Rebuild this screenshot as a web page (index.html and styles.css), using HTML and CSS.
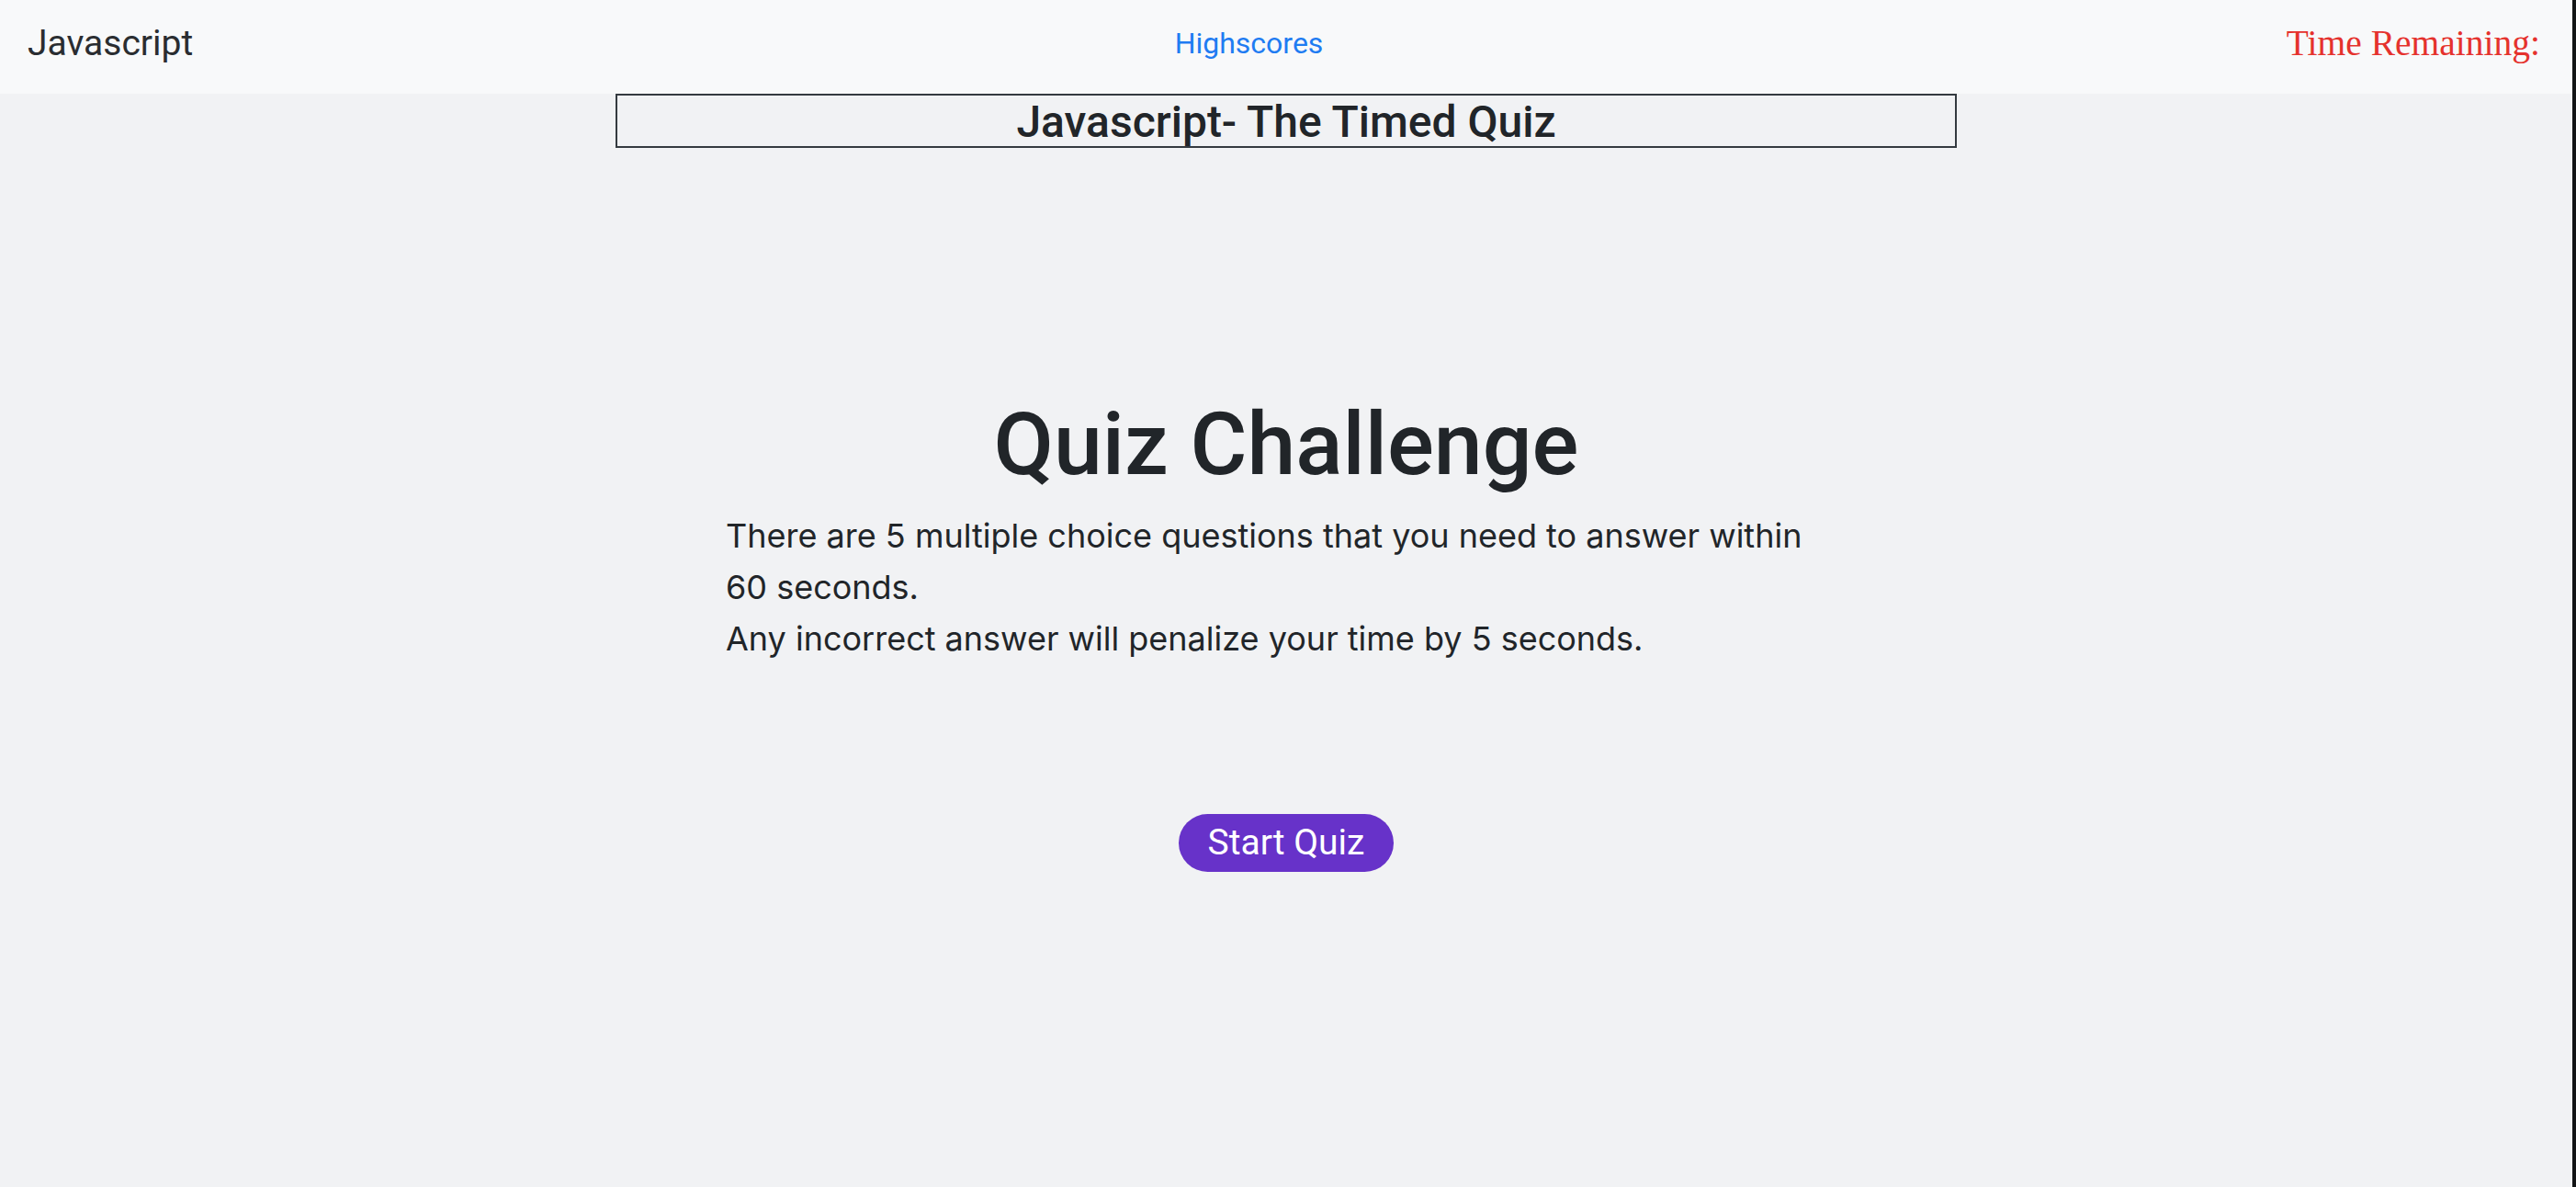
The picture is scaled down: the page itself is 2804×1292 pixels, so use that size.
FILE: index.html
```html
<!DOCTYPE html>
<html lang="en">
<head>
<meta charset="utf-8">
<title>Javascript- The Timed Quiz</title>
<link rel="stylesheet" href="styles.css">
</head>
<body>
<div class="page">
  <nav class="navbar">
    <span class="brand">Javascript</span>
    <a class="nav-link" href="#">Highscores</a>
    <div class="timer">Time Remaining:</div>
  </nav>
  <header class="title-box">
    <h3 class="title">Javascript- The Timed Quiz</h3>
  </header>
  <main class="intro">
    <h1 class="intro-heading">Quiz Challenge</h1>
    <p class="intro-text">There are 5 multiple choice questions that you need to answer within 60 seconds.<br>Any incorrect answer will penalize your time by 5 seconds.</p>
    <button class="start-btn" type="button">Start Quiz</button>
  </main>
</div>
<div class="edge"></div>
</body>
</html>
```

FILE: styles.css
```css
html, body {
  margin: 0;
  padding: 0;
  height: 100%;
}

body {
  display: flex;
  font-family: Roboto, "Liberation Sans", Arial, sans-serif;
  color: #212529;
  background: #f1f2f4;
}

.page {
  flex: 1;
  display: flex;
  flex-direction: column;
  background: #f1f2f4;
  min-width: 0;
}

.edge {
  width: 4px;
  flex: 0 0 4px;
  background: #131516;
}

.navbar {
  height: 102px;
  box-sizing: border-box;
  background: #f8f9fa;
  display: flex;
  align-items: center;
  justify-content: space-between;
  padding: 0 35px 8px 30px;
}

.brand {
  font-size: 39px;
  line-height: 48px;
  color: #2a2d31;
}

.nav-link {
  font-size: 32px;
  line-height: 38px;
  color: #1f7cf2;
  text-decoration: none;
  margin-left: 20px;
}

.timer {
  font-family: "Liberation Serif", "Times New Roman", serif;
  font-size: 39.5px;
  line-height: 45px;
  color: #e5322d;
}

.title-box {
  width: 1460px;
  box-sizing: border-box;
  margin: 0 auto;
  border: 2px solid #343a40;
  height: 59px;
  padding-top: 3px;
}

.title {
  margin: 0;
  font-size: 48px;
  font-weight: 500;
  line-height: 52px;
  text-align: center;
  color: #212529;
}

.intro {
  display: flex;
  flex-direction: column;
  align-items: center;
  padding-top: 265px;
}

.intro-heading {
  margin: 0;
  font-size: 95px;
  font-weight: 500;
  line-height: 115px;
  color: #212529;
}

.intro-text {
  width: 1220px;
  margin: 14px 0 0;
  font-family: Inter, Roboto, "Liberation Sans", sans-serif;
  font-size: 36px;
  line-height: 56px;
  color: #212529;
}

.start-btn {
  margin-top: 163px;
  height: 63px;
  padding: 0 32px;
  border: none;
  border-radius: 32px;
  background: #6732c9;
  color: #ffffff;
  font-family: Roboto, "Liberation Sans", Arial, sans-serif;
  font-size: 39px;
  line-height: 63px;
  cursor: pointer;
}
```
